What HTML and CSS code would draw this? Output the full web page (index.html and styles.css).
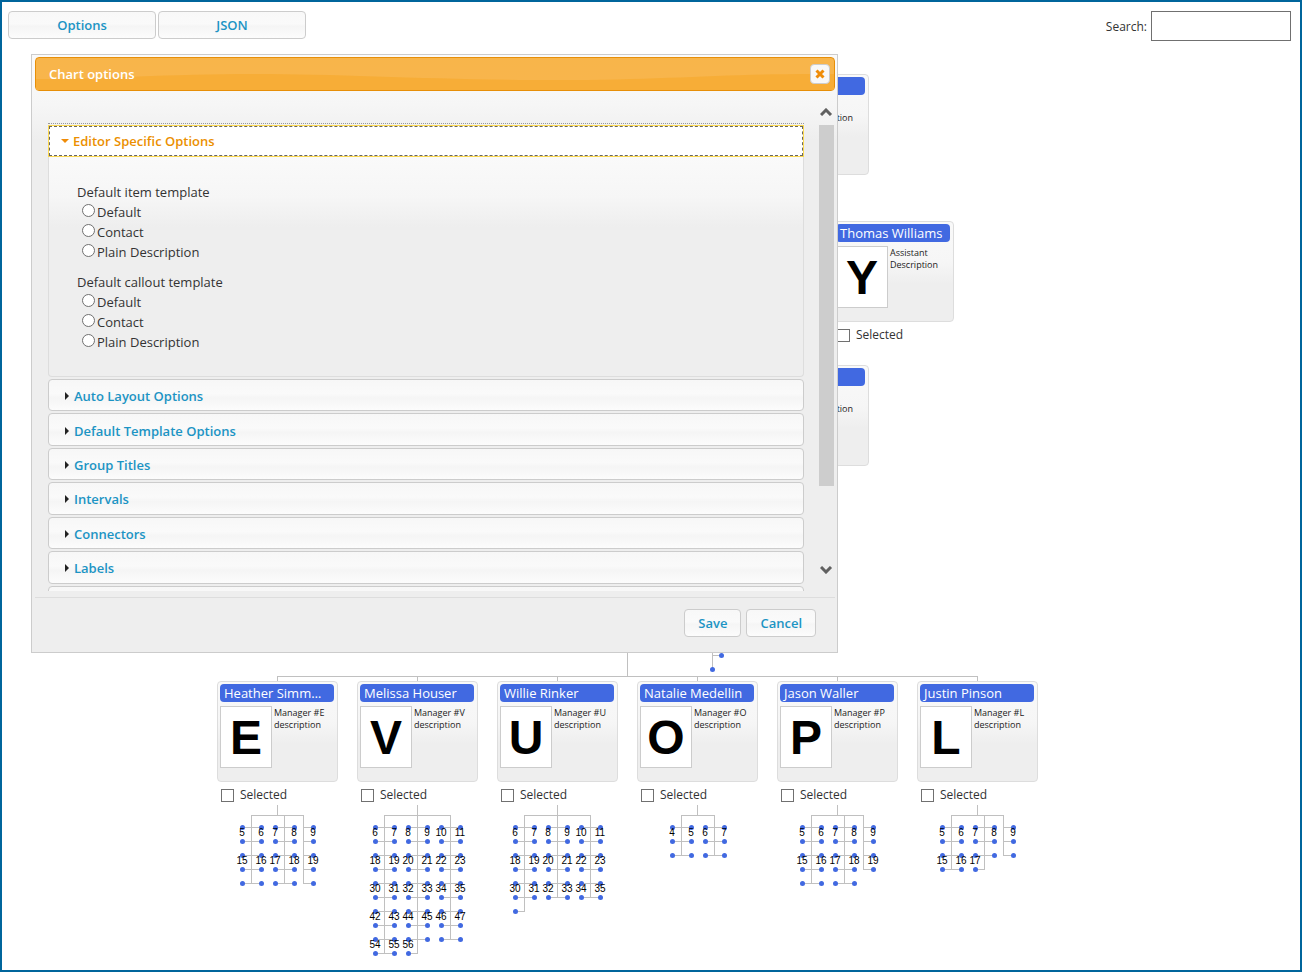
FILE: index.html
```html
<!DOCTYPE html>
<html lang="en">
<head>
  <meta charset="UTF-8" />
  <meta name="viewport" content="width=device-width, initial-scale=1.0" />
  <title>Chart options</title>
  <link rel="stylesheet" href="styles.css">
</head>
<body>
  <header class="toolbar">
    <button class="btn toolbar-btn" type="button">Options</button>
    <button class="btn toolbar-btn" type="button">JSON</button>
    <label class="search-label" for="search">Search:</label>
    <input class="search-box" type="text" id="search" />
  </header>

  <main class="chart" id="chart">
    <svg class="connectors" id="connectors"></svg>
  </main>

  <section class="dialog" role="dialog" aria-labelledby="dialogTitle">
    <div class="dialog-title">
      <svg class="title-wave" viewBox="0 0 800 32" preserveAspectRatio="none">
        <path d="M0 21 C70 21 130 16 220 16 S400 22 520 22 S690 15 800 16 V32 H0 Z" />
      </svg>
      <h1 id="dialogTitle">Chart options</h1>
      <button class="close-btn" type="button" aria-label="Close">
        <svg width="10" height="10" viewBox="0 0 10 10"><path d="M1.5 1.5 L8.5 8.5 M8.5 1.5 L1.5 8.5" /></svg>
      </button>
    </div>

    <div class="dialog-content">
      <div class="accordion">
        <button class="acc-header active" type="button">
          <svg class="arrow" width="8" height="8" viewBox="0 0 8 8"><path d="M0 2 H8 L4 6 Z" /></svg>
          Editor Specific Options
        </button>
        <div class="acc-panel">
          <fieldset>
            <legend>Default item template</legend>
            <label><input type="radio" name="itemTemplate" />Default</label>
            <label><input type="radio" name="itemTemplate" />Contact</label>
            <label><input type="radio" name="itemTemplate" />Plain Description</label>
          </fieldset>
          <fieldset>
            <legend>Default callout template</legend>
            <label><input type="radio" name="calloutTemplate" />Default</label>
            <label><input type="radio" name="calloutTemplate" />Contact</label>
            <label><input type="radio" name="calloutTemplate" />Plain Description</label>
          </fieldset>
        </div>
        <div class="acc-closed">
          <button class="acc-header" type="button"><svg class="arrow" width="8" height="8" viewBox="0 0 8 8"><path d="M3 0 V8 L7 4 Z" /></svg>Auto Layout Options</button>
          <button class="acc-header" type="button"><svg class="arrow" width="8" height="8" viewBox="0 0 8 8"><path d="M3 0 V8 L7 4 Z" /></svg>Default Template Options</button>
          <button class="acc-header" type="button"><svg class="arrow" width="8" height="8" viewBox="0 0 8 8"><path d="M3 0 V8 L7 4 Z" /></svg>Group Titles</button>
          <button class="acc-header" type="button"><svg class="arrow" width="8" height="8" viewBox="0 0 8 8"><path d="M3 0 V8 L7 4 Z" /></svg>Intervals</button>
          <button class="acc-header" type="button"><svg class="arrow" width="8" height="8" viewBox="0 0 8 8"><path d="M3 0 V8 L7 4 Z" /></svg>Connectors</button>
          <button class="acc-header" type="button"><svg class="arrow" width="8" height="8" viewBox="0 0 8 8"><path d="M3 0 V8 L7 4 Z" /></svg>Labels</button>
          <button class="acc-header" type="button" aria-label="More"></button>
        </div>
      </div>
      <div class="scrollbar">
        <svg width="13" height="8" viewBox="0 0 13 8"><path d="M1 7 L6 2 L11 7" /></svg>
        <div class="thumb"></div>
        <svg class="down" width="13" height="8" viewBox="0 0 13 8"><path d="M1 1 L6 6 L11 1" /></svg>
      </div>
    </div>

    <div class="dialog-buttons">
      <button class="btn" type="button">Save</button>
      <button class="btn" type="button">Cancel</button>
    </div>
  </section>

  <script src="script.js"></script>
</body>
</html>
```
FILE: styles.css
```css
* {
  box-sizing: border-box;
}

body {
  margin: 0;
  min-height: 100vh;
  position: relative;
  overflow: hidden;
  border: 2px solid #00659c;
  background: #fff;
  color: #333;
  font-family: "Open Sans", "Noto Sans", sans-serif;
  font-size: 13px;
}

button,
input {
  font-family: inherit;
  margin: 0;
}

.toolbar {
  display: flex;
  align-items: flex-start;
  gap: 2px;
  padding: 9px 9px 0 6px;
}

.btn {
  height: 28px;
  padding: 0 13px;
  border: 1px solid #ccc;
  border-radius: 4px;
  background: linear-gradient(#f8f8f8 0%, #fafafa 45%, #f5f5f5 55%, #fcfcfc 100%);
  color: #1c94c4;
  font-size: 13px;
  font-weight: 600;
  line-height: 20px;
}

.toolbar-btn {
  width: 148px;
}

.search-label {
  margin-left: auto;
  padding-right: 2px;
  font-size: 12px;
  line-height: 32px;
}

.search-box {
  width: 140px;
  height: 30px;
  border: 1px solid #707070;
  background: #fff;
}

/* org chart canvas */
.chart {
  position: absolute;
  inset: -2px;
}

.connectors {
  position: absolute;
  width: 100%;
  height: 100%;
  shape-rendering: crispEdges;
}

.connectors path {
  fill: none;
  stroke: #c0c0c0;
}

.connectors circle {
  fill: royalblue;
  shape-rendering: geometricPrecision;
}

.connectors text {
  fill: #000;
  font: 10px "Liberation Sans", Arial, sans-serif;
  text-anchor: middle;
}

.node {
  position: absolute;
  width: 121px;
}

.card {
  height: 101px;
  padding: 2px;
  border: 1px solid #ddd;
  border-radius: 4px;
  background: linear-gradient(#f9f9f9 0, #f6f6f6 40px, #eee 62px, #eee 100%);
}

.card-title {
  width: 114px;
  height: 18px;
  margin: 0;
  padding: 0 7px 0 4px;
  border-radius: 4px;
  background: royalblue;
  color: #fff;
  font-size: 13px;
  font-weight: 400;
  line-height: 18px;
  white-space: nowrap;
  overflow: hidden;
  text-overflow: ellipsis;
}

.card-body {
  display: flex;
  gap: 2px;
  padding-top: 4px;
}

.photo {
  width: 52px;
  height: 62px;
  border: 1px solid #ccc;
  background: #fff;
  color: #000;
  font: bold 48px/62px "Liberation Sans", Arial, sans-serif;
  text-align: center;
}

.card-body p {
  flex: 1;
  margin: 0;
  padding-top: 1px;
  color: #222;
  font-size: 9px;
  font-weight: 500;
  line-height: 12px;
}

.selected {
  display: flex;
  align-items: center;
  gap: 6px;
  padding: 4px 4px 0;
  font-size: 12px;
  line-height: 18px;
}

.selected input {
  appearance: none;
  width: 13px;
  height: 13px;
  border: 1px solid #707070;
  background: #fff;
}

/* options dialog */
.dialog {
  position: absolute;
  left: 29px;
  top: 52px;
  width: 807px;
  padding: 2px 2px 0 3px;
  border: 1px solid #ccc;
  background: linear-gradient(#fafafa 0, #f6f6f6 50px, #eee 85px, #eee 100%);
}

.dialog-title {
  position: relative;
  display: flex;
  align-items: center;
  justify-content: space-between;
  height: 34px;
  padding: 0 4px 0 13px;
  border: 1px solid #e78f08;
  border-radius: 4px;
  background: linear-gradient(#f8b54a, #f8b54d);
  color: #fff;
}

.title-wave {
  position: absolute;
  left: 0;
  top: 0;
  width: 100%;
  height: 100%;
}

.title-wave path {
  fill: #f7ad37;
}

.dialog-title h1 {
  position: relative;
  margin: 0;
  font-size: 13px;
  font-weight: 600;
}

.close-btn {
  position: relative;
  display: flex;
  align-items: center;
  justify-content: center;
  width: 20px;
  height: 20px;
  padding: 0;
  border: 1px solid #ccc;
  border-radius: 4px;
  background: #f8f8f8;
}

.close-btn path {
  stroke: #ef8c08;
  stroke-width: 3;
}

.dialog-content {
  display: flex;
  justify-content: space-between;
  height: 500px;
  padding-left: 13px;
  overflow: hidden;
}

.accordion {
  flex: 1;
  padding-top: 32px;
}

.accordion::before {
  content: "";
  display: block;
  margin-bottom: 1px;
  border-top: 1px dotted #999;
}

.acc-header {
  display: flex;
  align-items: center;
  gap: 4px;
  width: 100%;
  padding: 2px 13px 0;
  border: 1px solid #ccc;
  border-radius: 4px;
  background: linear-gradient(#f7f7f7 0%, #fafafa 45%, #f5f5f5 60%, #fcfcfc 100%);
  color: #1c94c4;
  font-size: 13px;
  font-weight: 600;
  line-height: 20px;
}

.acc-header.active {
  height: 32px;
  padding: 0 12px;
  border-color: #fbd850;
  border-radius: 0;
  outline: 1px dashed #666;
  outline-offset: -2px;
  background: #fff;
  color: #eb8f00;
}

.arrow {
  fill: #222;
}

.active .arrow {
  fill: #ef8c08;
}

.acc-panel {
  display: flex;
  flex-direction: column;
  gap: 10px;
  height: 220px;
  margin-bottom: 2px;
  padding: 25px 28px;
  border: 1px solid #ddd;
  border-top: 0;
  border-radius: 0 0 4px 4px;
  background: linear-gradient(#fafafa 0, #f6f6f6 40px, #eee 70px, #eee 100%);
}

fieldset {
  margin: 0;
  padding: 0;
  border: 0;
}

legend {
  padding: 0;
  line-height: 20px;
}

fieldset label {
  display: flex;
  align-items: flex-start;
  gap: 2px;
  padding-left: 5px;
  line-height: 20px;
}

fieldset input {
  appearance: none;
  width: 13px;
  height: 13px;
  margin-top: 2px;
  border: 1px solid #707070;
  border-radius: 50%;
  background: #fff;
}

.acc-closed {
  display: grid;
  grid-auto-rows: 1fr;
  gap: 2px;
  height: 239px;
}

.scrollbar {
  display: flex;
  flex-direction: column;
  align-items: center;
  width: 15px;
  margin: 17px 1px 17px 15px;
}

.scrollbar path {
  fill: none;
  stroke: #606060;
  stroke-width: 3;
}

.thumb {
  width: 100%;
  height: 361px;
  margin-top: 9px;
  background: #cdcdcd;
}

.down {
  margin-top: auto;
}

.dialog-buttons {
  display: flex;
  justify-content: flex-end;
  gap: 5px;
  margin-top: 6px;
  padding: 11px 19px 15px;
  border-top: 1px solid #ddd;
}
```
FILE: script.js
```js
const chart = document.getElementById("chart");
const connectors = document.getElementById("connectors");

// x, y, name, letter, description
const nodes = [
  [748, 74, "", "", "Chief<br>Description"],
  [833, 221, "Thomas Williams", "Y", "Assistant<br>Description"],
  [748, 365, "", "", "Adviser<br>Description"],
  [217, 681, "Heather Simmons", "E", "Manager #E<br>description"],
  [357, 681, "Melissa Houser", "V", "Manager #V<br>description"],
  [497, 681, "Willie Rinker", "U", "Manager #U<br>description"],
  [637, 681, "Natalie Medellin", "O", "Manager #O<br>description"],
  [777, 681, "Jason Waller", "P", "Manager #P<br>description"],
  [917, 681, "Justin Pinson", "L", "Manager #L<br>description"],
];

// center x, number of items, stem offsets, items per row
const trees = [
  [277, 25, [-26, 7, 26], 5],
  [417, 57, [-33, 0, 33], 6],
  [557, 37, [-33, 0, 33], 6],
  [697, 12, [-16, 17], 4],
  [837, 24, [-26, 7, 26], 5],
  [977, 18, [-26, 7, 26], 5],
];

nodes.forEach(([x, y, name, letter, text], i) => {
  const node = document.createElement("div");
  node.className = "node";
  node.style.left = x + "px";
  node.style.top = y + "px";
  node.innerHTML = `
    <div class="card">
      <h2 class="card-title">${name}</h2>
      <div class="card-body"><div class="photo">${letter}</div><p>${text}</p></div>
    </div>
    ${name ? `<label class="selected" for="sel${i}"><input type="checkbox" id="sel${i}" />Selected</label>` : ""}`;
  chart.appendChild(node);
});

let lines = "M277.5 681 V676.5 H977.5 V681 M627.5 650 V676 M712.5 650 V669 M712 655.5 H721";
let dots = '<circle cx="721.5" cy="655.5" r="2.5" /><circle cx="712.5" cy="669.5" r="2.5" />';
let labels = "";

for (let x = 417.5; x < 900; x += 140) {
  lines += ` M${x} 676 V681`;
}

trees.forEach(([cx, count, stems, cols]) => {
  const ends = stems.map(() => 0);
  lines += ` M${cx + 0.5} 805 V815 M${cx + stems[0]} 815.5 H${cx + stems[stems.length - 1] + 1}`;

  for (let i = 0; i < count; i++) {
    const row = Math.floor(i / cols);
    const col = i % cols;
    let stem = Math.floor(col / 2);
    let side = col % 2 ? 10 : -9;
    if (cols === 5 && col === 4) side = 10;

    const sx = cx + stems[stem];
    const x = sx + side;
    const y = 827 + row * 14;
    ends[stem] = y;
    lines += ` M${sx + 0.5} ${y + 0.5} H${x}`;
    dots += `<circle cx="${x + 0.5}" cy="${y + 0.5}" r="2.5" />`;
    // the number sits between an odd row and the row above it
    if (row % 2) labels += `<text x="${x}" y="${y - 5}">${i}</text>`;
  }

  stems.forEach((s, i) => {
    lines += ` M${cx + s + 0.5} 815 V${ends[i] + 1}`;
  });
});

connectors.innerHTML = `<path d="${lines}" />` + dots + labels;
```
